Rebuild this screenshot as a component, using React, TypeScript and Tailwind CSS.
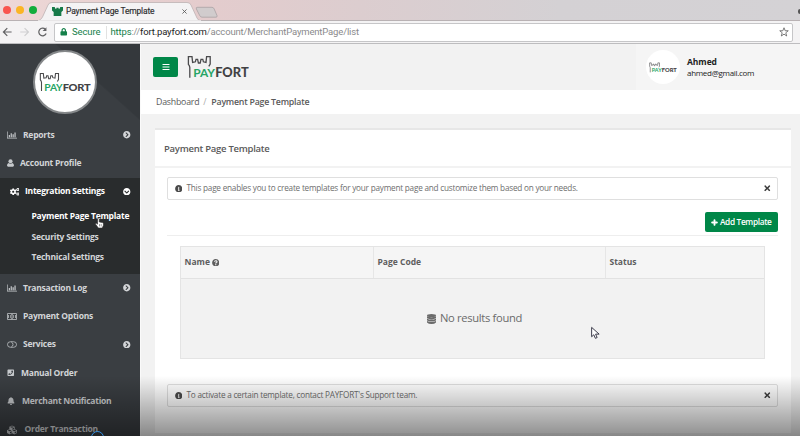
import React from "react";
import {
  FaBars, FaBell, FaChevronCircleDown, FaChevronCircleRight, FaCogs, FaCubes,
  FaInfoCircle, FaLock, FaPhoneSquare, FaPlus, FaQuestionCircle, FaTimes,
} from "react-icons/fa";

function Logo({ className }: { className: string }) {
  return (
    <svg viewBox="0 0 62 24" className={className}>
      <path
        d="M2.8 22.8V12.4Q2.6 10.8 1.4 9.4V1.7H5L5.6 7.4L8.4 6.8L9 4.4H10.6L11.4 8H13.2L14 4.4H15.8L16.4 6.8L19 7.4L19.6 1.7H23.2V9L21.8 11.4"
        fill="none" stroke="#4a4a4c" strokeWidth="1.3"
      />
      <text x="6.2" y="22.4" fontFamily="Lato, sans-serif" fontWeight="700" fontSize="12.2" fill="#27a566" textLength="21.8" lengthAdjust="spacingAndGlyphs">PAY</text>
      <text x="28.2" y="22.4" fontFamily="Lato, sans-serif" fontWeight="900" fontSize="12.2" fill="#424244" textLength="33.5" lengthAdjust="spacingAndGlyphs">FORT</text>
    </svg>
  );
}

const UserIcon = () => (
  <svg viewBox="0 0 14 16" className="h-[8px] w-[7px]" fill="currentColor">
    <circle cx="7" cy="4.6" r="4.1" />
    <path d="M3.2 8Q7 11 10.8 8Q14 9 14 13.2Q14 15.5 11.6 15.5H2.4Q0 15.5 0 13.2Q0 9 3.2 8z" />
  </svg>
);
const ChartIcon = () => (
  <svg viewBox="0 0 20 16" className="h-[8px] w-[10px]" fill="currentColor">
    <path d="M0 1h1.3v12.7H20V15H0zM3.5 8h2.4v4.5H3.5zM7.3 4.5h2.4v8H7.3zM11.1 6.5h2.4v6h-2.4zM14.9 3h2.4v9.5h-2.4z" />
  </svg>
);
const MoneyIcon = () => (
  <svg viewBox="0 0 20 14" className="h-[7px] w-[10px]" fill="none" stroke="currentColor" strokeWidth="1.5">
    <path d="M1 1h18v12H1z" />
    <ellipse cx="10" cy="7" rx="3" ry="4" />
    <path d="M10 5v4M3 4v6M17 4v6" />
  </svg>
);
const ToggleIcon = () => (
  <svg viewBox="0 0 20 14" className="h-[7px] w-[10px]" fill="none" stroke="currentColor" strokeWidth="1.5">
    <rect x="1" y="1.5" width="18" height="11" rx="5.5" />
    <path d="M8.5 2Q12 3.5 12 7T8.5 12" />
  </svg>
);
const DatabaseIcon = () => (
  <svg viewBox="0 0 18 20" className="h-[10px] w-[9px]" fill="currentColor">
    <ellipse cx="9" cy="3" rx="9" ry="3" />
    <path d="M0 4.6q9 3.6 18 0v3.8q-9 4-18 0zM0 9.4q9 3.6 18 0v3.8q-9 4-18 0zM0 14.2q9 3.6 18 0v2.6q-3 3-9 3t-9-3z" />
  </svg>
);

type Item = { label: string; icon: React.ReactNode; gap: string; arrow?: boolean };

function Row({ item }: { item: Item }) {
  return (
    <div className="flex h-[28.3px] items-center pr-[9.5px] pl-[7px] text-[#d3d5d8]">
      <span className="flex shrink-0 text-[#c6c9cc]">{item.icon}</span>
      <span className={item.gap}>{item.label}</span>
      {item.arrow && <FaChevronCircleRight className="ml-auto size-[7.5px]" />}
    </div>
  );
}

const top: Item[] = [
  { label: "Reports", icon: <ChartIcon />, gap: "ml-[6px]", arrow: true },
  { label: "Account Profile", icon: <UserIcon />, gap: "ml-[6px]" },
];
const bottom: Item[] = [
  { label: "Transaction Log", icon: <ChartIcon />, gap: "ml-[6px]", arrow: true },
  { label: "Payment Options", icon: <MoneyIcon />, gap: "ml-[6px]" },
  { label: "Services", icon: <ToggleIcon />, gap: "ml-[6px]", arrow: true },
  { label: "Manual Order", icon: <FaPhoneSquare className="size-[7.5px]" />, gap: "ml-[6.5px]" },
  { label: "Merchant Notification", icon: <FaBell className="size-[8px]" />, gap: "ml-[7px]" },
  { label: "Order Transaction", icon: <FaCubes className="size-[10px]" />, gap: "ml-[7.5px]" },
];

function Sidebar() {
  return (
    <aside className="h-[392px] w-[140px] shrink-0 overflow-hidden bg-[#3a3e42] text-[8.5px] leading-none font-bold tracking-[-0.24px] whitespace-nowrap">
      <div className="flex h-[77px] justify-center bg-[linear-gradient(42deg,#3a3e42_62%,#34383c_63%)] pt-[6px] pr-[10px]">
        <div className="flex size-[64px] items-center justify-center rounded-full border-2 border-[#85888a] bg-white">
          <Logo className="h-[20px] w-[52px]" />
        </div>
      </div>
      {top.map((i) => <Row key={i.label} item={i} />)}
      <div className="h-[96.4px] bg-[#292c2d] text-[#d3d5d8]">
        <div className="flex h-[28px] items-center pr-[9.5px] pl-[9.5px] text-white">
          <FaCogs className="size-[9.5px]" />
          <span className="ml-[6px]">Integration Settings</span>
          <FaChevronCircleDown className="ml-auto size-[7.5px]" />
        </div>
        <div className="flex h-[21px] items-center pl-[31.5px] text-white">Payment Page Template</div>
        <div className="flex h-[20.5px] items-center pl-[31.5px]">Security Settings</div>
        <div className="flex h-[20.5px] items-center pl-[31.5px]">Technical Settings</div>
      </div>
      {bottom.map((i) => <Row key={i.label} item={i} />)}
    </aside>
  );
}

function Browser() {
  return (
    <div className="h-[44px] font-[Roboto,sans-serif]">
      <div className="relative flex h-[20px] items-center bg-[linear-gradient(90deg,#eed8d7,#e4cccd_25%,#dccdcf_45%,#d4d1d4_70%,#d4d2d5)]">
        <svg viewBox="0 0 800 21" className="absolute top-0 left-0 h-[21px] w-[800px]">
          <path d="M0 20.5H800" stroke="#b9b2b4" />
          <path d="M38 20.8 Q41 20 42.5 17L48 5Q49 2.5 52 2.5H187Q190 2.5 191 5L197 18Q198 20.5 201 20.8z" fill="#f4f3f4" stroke="#bcb3b4" strokeWidth=".8" />
          <path d="M38 20.8H201" stroke="#f4f3f4" />
          <path d="M197 7.3H212Q213.5 7.3 214.2 9L217 15.5Q217.5 17.2 216 17.2H202Q200.5 17.2 199.8 15.7L196.4 9Q195.8 7.3 197 7.3z" fill="#d1cccd" stroke="#aaa2a4" strokeWidth=".8" />
        </svg>
        <div className="relative flex w-full items-center pt-[2px] pl-[3px]">
          <i className="-mt-[3px] size-[8px] rounded-full bg-[#f9544d]" />
          <i className="-mt-[3px] ml-[5px] size-[8px] rounded-full bg-[#fbb524]" />
          <i className="-mt-[3px] ml-[5px] size-[8px] rounded-full bg-[#12ad3c]" />
          <svg viewBox="0 0 20 16" className="ml-[15px] h-[9px] w-[11px]"><path d="M0 0h5l1 3h2V1h4v2h2l1-3h5v6l-3 3v7H3V9L0 6z" fill="#177a49" /></svg>
          <span className="ml-[3px] w-[116px] text-[8.5px] leading-[12px] tracking-[-0.17px] text-[#2e2e30] [-webkit-text-stroke:0.15px]">Payment Page Template</span>
          <svg viewBox="0 0 6 6" className="size-[5px]"><path d="M.5.5l5 5M5.5.5l-5 5" stroke="#555" /></svg>
          <i className="ml-auto h-[5px] w-[2px] rounded-l bg-[#555]" />
        </div>
      </div>
      <div className="flex h-[24px] items-center border-b border-[#bdbdbf] bg-[#f4f3f4] pt-[1px] pr-[7px] pl-[2px]">
        <svg viewBox="0 0 50 12" className="mr-[4px] h-[12px] w-[48px]" fill="none" strokeWidth="1.3">
          <path d="M10 6H1.5M5.5 2l-4 4 4 4" stroke="#626264" />
          <path d="M19 6h8.5M23.5 2l4 4-4 4" stroke="#cfcfd1" />
          <path d="M45.2 3.2A4 4 0 1 0 46 7.6" stroke="#626264" />
          <path d="M46.3 1v4h-4z" fill="#626264" />
        </svg>
        <div className="flex h-[19px] flex-1 items-center rounded-[2px] border border-[#c6c6c8] bg-white pr-[3px] pl-[5px] text-[9.5px] leading-none">
          <FaLock className="size-[7.5px] text-[#15804a]" />
          <span className="ml-[4.5px] w-[33.5px] tracking-[-0.1px] text-[#15804a]">Secure</span>
          <i className="mr-[4px] h-[13px] w-px bg-[#e2e2e2]" />
          <span className="tracking-[-0.16px] whitespace-nowrap text-[#8a8a8c]"><span className="text-[#15804a]">https</span>://<span className="text-[#222]">fort.payfort.com</span>/account/MerchantPaymentPage/list</span>
          <svg viewBox="0 0 20 20" className="ml-auto size-[10px]"><path d="M10 1.5l2.4 6h6.1l-4.9 4 1.8 6.5-5.4-3.7L4.6 18l1.8-6.5-4.9-4h6.1z" fill="none" stroke="#666" strokeWidth="1.7" /></svg>
        </div>
      </div>
    </div>
  );
}

function Alert({ children }: { children: string }) {
  return (
    <div className="mr-[13px] ml-[12px] flex h-[23px] items-center rounded-[2px] border border-[#dfdfdf] pr-[6px] pl-[6.5px] text-[8.2px] text-[#6e6e6e]">
      <FaInfoCircle className="size-[7.5px] text-[#4a4a4a]" />
      <span className="ml-[4.5px] tracking-[-0.22px]">{children}</span>
      <FaTimes className="ml-auto size-[8.5px] text-[#3e3e3e]" />
    </div>
  );
}

export default function App() {
  return (
    <div className="relative h-[436px] w-[800px] overflow-hidden bg-[#f2f2f2] font-['Open_Sans',sans-serif]">
      <Browser />
      <div className="flex">
        <Sidebar />
        <main className="min-w-0 flex-1 border-l border-[#fafafa]">
          <header className="flex h-[46px] items-center justify-between pl-[12px]">
            <div className="flex items-center">
              <div className="flex h-[20px] w-[25px] items-center justify-center rounded-[2px] bg-[#008748]"><FaBars className="size-[8px] text-white" /></div>
              <Logo className="ml-[9px] h-[24px] w-[62px]" />
            </div>
            <div className="flex h-full w-[164px] items-center bg-[#f5f5f5] pl-[10px]">
              <div className="flex size-[34px] items-center justify-center rounded-full bg-white"><Logo className="h-[11px] w-[28px]" /></div>
              <div className="ml-[7px] text-[#222]">
                <div className="text-[8.5px] leading-[10px] font-bold tracking-[-0.05px]">Ahmed</div>
                <div className="text-[8px] leading-[11px] tracking-[-0.3px]">ahmed@gmail.com</div>
              </div>
            </div>
          </header>
          <nav className="flex h-[24px] items-center bg-white pt-[2px] pl-[15px] text-[8.8px] tracking-[-0.23px] text-[#5a5a5a]">
            <span>Dashboard</span><span className="mx-[4px] text-[#aaa]">/</span><span className="ml-[1px] font-semibold">Payment Page Template</span>
          </nav>
          <section className="mt-[14px] mr-[9px] ml-[14px] h-[305px] border-t-2 border-[#e7e7e7] bg-white">
            <h1 className="flex h-[38px] items-center border-b-2 border-[#f2f2f2] pt-[2px] pl-[9px] text-[9.5px] font-semibold tracking-[-0.26px] text-[#5a5a5a]">Payment Page Template</h1>
            <div className="h-[9px]" />
            <Alert>This page enables you to create templates for your payment page and customize them based on your needs.</Alert>
            <div className="mr-[13px] ml-[12px] flex h-[36px] items-center justify-end border-b border-[#eeeeee] pt-[10px]">
              <button className="mb-[1px] flex h-[20px] w-[73px] items-center justify-center rounded-[2px] bg-[#008748] text-[8.3px] font-semibold tracking-[-0.35px] whitespace-nowrap text-white"><FaPlus className="mr-[1.5px] size-[7px] stroke-white stroke-[40]" />Add Template</button>
            </div>
            <div className="mt-[10px] ml-[25px] h-[113px] w-[585px] border border-[#e4e4e4] bg-[#f2f2f2]">
              <div className="grid h-[32px] grid-cols-[193px_232px_1fr] border-b border-[#e2e2e2] bg-[#f5f5f5] text-[8.5px] font-bold text-[#5e5e5e]">
                <div className="flex items-center border-r border-[#e6e6e6] pl-[3.5px]">Name<FaQuestionCircle className="ml-[2px] size-[7.5px]" /></div>
                <div className="flex items-center border-r border-[#e6e6e6] pl-[3.5px]">Page Code</div>
                <div className="flex items-center pl-[3.5px]">Status</div>
              </div>
              <div className="flex h-[79px] items-center justify-center gap-[4px] pl-[4px] text-[11.2px] tracking-[-0.33px] text-[#6b6b6b]"><DatabaseIcon /><span>No results found</span></div>
            </div>
            <div className="h-[25px]" />
            <Alert>To activate a certain template, contact PAYFORT's Support team.</Alert>
          </section>
        </main>
      </div>
      <div className="absolute inset-x-0 bottom-0 h-[60px] bg-linear-to-b from-black/0 to-black/44" />
      <div className="absolute top-[431px] left-[91px] size-[13px] rounded-full border-[1.5px] border-[#328de0]" />
      <svg viewBox="0 0 16 20" className="absolute top-[326px] left-[591px] h-[14px] w-[10px]"><path d="M1 1v15l3.5-3.2L7 18.5l2.8-1.2-2.5-5.5H13z" fill="white" stroke="#303040" strokeWidth="1.5" /></svg>
      <svg viewBox="0 0 16 20" className="absolute top-[217px] left-[95px] h-[12px] w-[9px]"><path d="M4.5 12V3q0-2 1.5-2t1.5 2v5l6 1.2q1.5.5 1.5 2V14l-2 5H6l-5-7q0-2 1.7-1.5z" fill="white" stroke="#333" strokeWidth="1.2" /><path d="M8 12v4m3-4v4" stroke="#444" /></svg>
    </div>
  );
}
